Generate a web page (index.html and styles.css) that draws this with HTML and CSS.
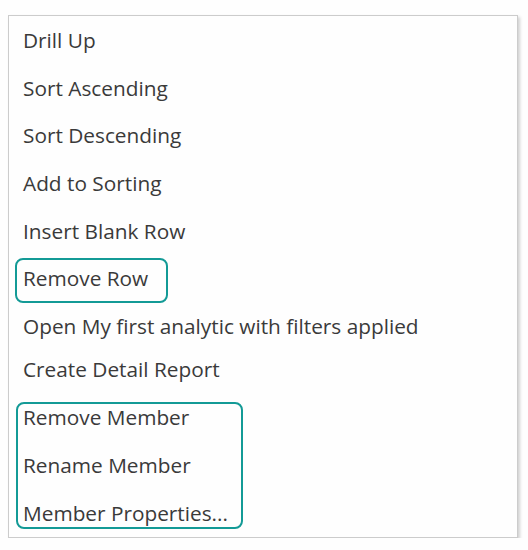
FILE: index.html
```html
<!DOCTYPE html>
<html>
<head>
<meta charset="utf-8">
<link rel="stylesheet" href="styles.css">
</head>
<body>
<div class="menu">
  <div class="item">Drill Up</div>
  <div class="item">Sort Ascending</div>
  <div class="item">Sort Descending</div>
  <div class="item">Add to Sorting</div>
  <div class="item">Insert Blank Row</div>
  <div class="item">Remove Row</div>
  <div class="item item-short">Open My first analytic with filters applied</div>
  <div class="item item-tall">Create Detail Report</div>
  <div class="item item-tall">Remove Member</div>
  <div class="item item-tall">Rename Member</div>
  <div class="item item-tall">Member Properties...</div>
  <div class="mark mark-row"></div>
  <div class="mark mark-member"></div>
</div>
</body>
</html>
```
FILE: styles.css
```css
html, body {
  margin: 0;
  padding: 0;
  background: #fefefe;
}
body {
  padding: 15px 0 0 8px;
  font-family: "Open Sans", "Liberation Sans", sans-serif;
}
.menu {
  position: relative;
  width: 508px;
  border: 1px solid #cccccc;
  background: #fefefe;
  box-shadow: 2px 2px 3px rgba(0, 0, 0, 0.18);
}
.item {
  box-sizing: border-box;
  height: 47.7px;
  line-height: 47.7px;
  padding-top: 1px;
  padding-left: 14px;
  font-size: 20.8px;
  color: #3a3a3a;
  white-space: nowrap;
}
.item-short {
  height: 43px;
}
.item-tall {
  height: 48px;
  line-height: 48px;
  padding-top: 0;
}
.mark {
  position: absolute;
  border: 2.5px solid #139a96;
  border-radius: 8px;
  box-sizing: border-box;
}
.mark-row {
  left: 6px;
  top: 242px;
  width: 153px;
  height: 45px;
}
.mark-member {
  left: 7px;
  top: 386px;
  width: 227px;
  height: 127px;
}
```
